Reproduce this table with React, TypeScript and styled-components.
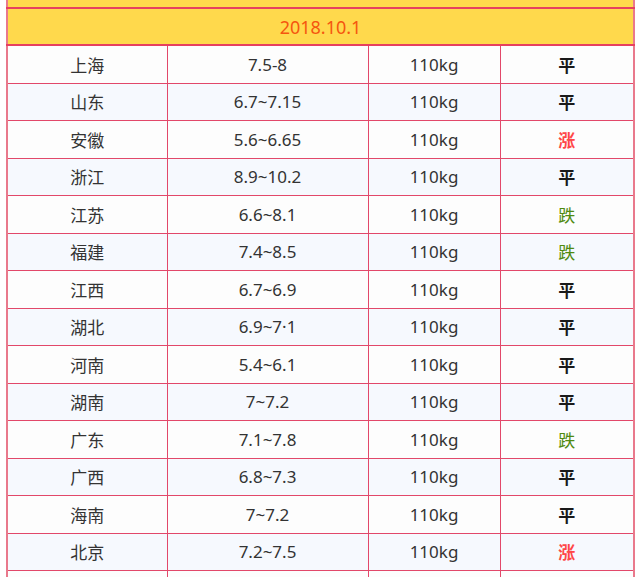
import styled, { createGlobalStyle } from "styled-components";

const GlobalStyle = createGlobalStyle`
  html, body {
    margin: 0;
    padding: 0;
    background: #ffffff;
    font-family: "Noto Sans", "Noto Sans CJK SC", sans-serif;
  }
`;

type Trend = "up" | "flat" | "down";

type PriceRow = {
  area: string;
  price: string;
  weight: string;
  trend: Trend;
};

const rows: PriceRow[] = [
  { area: "上海", price: "7.5-8", weight: "110kg", trend: "flat" },
  { area: "山东", price: "6.7~7.15", weight: "110kg", trend: "flat" },
  { area: "安徽", price: "5.6~6.65", weight: "110kg", trend: "up" },
  { area: "浙江", price: "8.9~10.2", weight: "110kg", trend: "flat" },
  { area: "江苏", price: "6.6~8.1", weight: "110kg", trend: "down" },
  { area: "福建", price: "7.4~8.5", weight: "110kg", trend: "down" },
  { area: "江西", price: "6.7~6.9", weight: "110kg", trend: "flat" },
  { area: "湖北", price: "6.9~7·1", weight: "110kg", trend: "flat" },
  { area: "河南", price: "5.4~6.1", weight: "110kg", trend: "flat" },
  { area: "湖南", price: "7~7.2", weight: "110kg", trend: "flat" },
  { area: "广东", price: "7.1~7.8", weight: "110kg", trend: "down" },
  { area: "广西", price: "6.8~7.3", weight: "110kg", trend: "flat" },
  { area: "海南", price: "7~7.2", weight: "110kg", trend: "flat" },
  { area: "北京", price: "7.2~7.5", weight: "110kg", trend: "up" },
];

const trendLabel: Record<Trend, string> = { up: "涨", flat: "平", down: "跌" };
const trendColor: Record<Trend, string> = {
  up: "#ff4747",
  flat: "#1a1a1a",
  down: "#4f8a10",
};

const Page = styled.div`
  height: 577px;
  overflow: hidden;
  padding-left: 6px;
`;

const Table = styled.table`
  width: 629px;
  border-collapse: collapse;
  table-layout: fixed;
  border-left: 2px solid #e9798c;
  border-right: 2px solid #e9798c;
`;

const Cap = styled.tr`
  background: #ffd94c;
  td {
    height: 7px;
    padding: 0;
    border-bottom: 2px solid #e6405f;
  }
`;

const TitleRow = styled.tr`
  background: #ffd94c;
  td {
    height: 35px;
    padding: 0;
    text-align: center;
    color: #f5560f;
    font-size: 18px;
    border-bottom: 2px solid #e6405f;
  }
`;

const Row = styled.tr<{ $alt: boolean }>`
  background: ${(p) => (p.$alt ? "#f6f9fe" : "#fdfdfd")};
`;

const Cell = styled.td`
  height: 36.5px;
  padding: 0;
  text-align: center;
  font-size: 17px;
  color: #333333;
  border: 1.5px solid #e2486a;
  &:first-child {
    border-left: none;
  }
  &:last-child {
    border-right: none;
  }
`;

const Filler = styled.tr`
  background: #fdfdfd;
  td {
    height: 30px;
    padding: 0;
  }
`;

const TrendMark = styled.span<{ $color: string; $bold: boolean }>`
  font-family: "Noto Sans CJK SC", sans-serif;
  color: ${(p) => p.$color};
  font-weight: ${(p) => (p.$bold ? 700 : 400)};
`;

export default function App() {
  return (
    <Page>
      <GlobalStyle />
      <Table>
        <colgroup>
          <col style={{ width: 160 }} />
          <col style={{ width: 201 }} />
          <col style={{ width: 132 }} />
          <col style={{ width: 134 }} />
        </colgroup>
        <tbody>
          <Cap>
            <td colSpan={4} />
          </Cap>
          <TitleRow>
            <td colSpan={4}>2018.10.1</td>
          </TitleRow>
          {rows.map((r, i) => (
            <Row key={r.area} $alt={i % 2 === 1}>
              <Cell>{r.area}</Cell>
              <Cell>{r.price}</Cell>
              <Cell>{r.weight}</Cell>
              <Cell>
                <TrendMark
                  $color={trendColor[r.trend]}
                  $bold={r.trend !== "down"}
                >
                  {trendLabel[r.trend]}
                </TrendMark>
              </Cell>
            </Row>
          ))}
          <Filler>
            <Cell />
            <Cell />
            <Cell />
            <Cell />
          </Filler>
        </tbody>
      </Table>
    </Page>
  );
}
